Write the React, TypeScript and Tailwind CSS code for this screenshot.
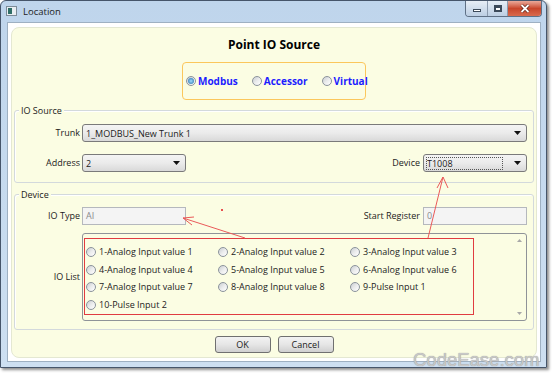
import React from 'react';

interface RadioProps {
    checked?: boolean;
}

// Small Aero-style radio circle
const Radio: React.FC<RadioProps> = ({ checked = false }) => (
    <span className="flex h-[10px] w-[10px] shrink-0 items-center justify-center rounded-full border border-[#8b939b] bg-linear-to-br from-[#c9cdd1] via-[#ebeced] to-[#ffffff]">
        {checked && <span className="h-[6px] w-[6px] rounded-full bg-radial from-[#9fdcff] to-[#1d6ca6]" />}
    </span>
);

interface ComboProps {
    value: string;
    className?: string;
    focused?: boolean;
}

const Combo: React.FC<ComboProps> = ({ value, className = '', focused }) => (
    <div className={`flex h-[18px] items-center rounded-[3px] border border-[#7a7a7a] bg-linear-to-b from-[#f4f4f4] via-[#ebebeb] to-[#d9d9d9] pl-[2px] pr-[5px] ${className}`}>
        <span className="flex h-[14px] flex-1 items-center">
            <span className={`flex h-[13px] items-center leading-none ${focused ? 'w-[92%] border border-dotted border-[#555]' : 'pl-[1px]'}`}>
                {value}
            </span>
        </span>
        <svg width="7" height="4" viewBox="0 0 7 4" className="ml-[4px] shrink-0">
            <path d="M0 0h7L3.5 4z" fill="#111" />
        </svg>
    </div>
);

const TextBox: React.FC<{ value: string }> = ({ value }) => (
    <div className="flex h-[18px] w-[104px] items-center border border-[#b5b8bd] bg-[#f4f4f4] pl-[3px] text-[#8a8a8a]">
        {value}
    </div>
);

const ioItems = [
    '1-Analog Input value 1',
    '2-Analog Input value 2',
    '3-Analog Input value 3',
    '4-Analog Input value 4',
    '5-Analog Input value 5',
    '6-Analog Input value 6',
    '7-Analog Input value 7',
    '8-Analog Input value 8',
    '9-Pulse Input 1',
    '10-Pulse Input 2',
];

export default function App() {
    return (
        <div className="relative h-[374px] w-[554px] overflow-hidden bg-white font-['Open_Sans','Noto_Sans',sans-serif] text-[9px] text-[#1b1b1b]">
            {/* Window */}
            <div className="flex h-[368px] w-[547px] flex-col rounded-t-[6px] border border-[#46556a] bg-linear-to-b from-[#bfd5ec] to-[#cddff1] shadow-[2px_2px_3px_rgba(0,0,0,0.45)]">
                {/* Title bar */}
                <div className="flex h-[21px] shrink-0 items-start">
                    <div className="ml-[5px] mt-[5px] flex h-[10px] w-[11px] items-center border border-[#7d8c99] bg-[#e9eef2]">
                        <span className="ml-[1px] h-[6px] w-[4px] bg-[#2f6e67]" />
                    </div>
                    <span className="ml-[6px] mt-[4px] text-[9.5px] text-[#1d1d1d]">Location</span>
                    <div className="flex-1" />
                    <div className="mr-[4px] flex h-[16px] overflow-hidden rounded-b-[4px] border border-t-0 border-[#5f7085]">
                        <div className="flex w-[22px] items-center justify-center border-r border-[#8a9aad] bg-linear-to-b from-[#e7eef6] to-[#bccee3]">
                            <span className="mt-[3px] h-[3px] w-[8px] border border-[#3c4a5a] bg-white" />
                        </div>
                        <div className="flex w-[20px] items-center justify-center border-r border-[#8a9aad] bg-linear-to-b from-[#e7eef6] to-[#bccee3]">
                            <span className="h-[7px] w-[8px] border-2 border-[#3c4a5a] border-t-[3px] bg-white" />
                        </div>
                        <div className="flex w-[33px] items-center justify-center bg-linear-to-b from-[#e9a99a] via-[#c8462b] to-[#d96a4d]">
                            <svg width="10" height="9" viewBox="0 0 10 9">
                                <path d="M1.5 1l7 7M8.5 1l-7 7" stroke="#5a1c10" strokeWidth="3.2" />
                                <path d="M1.5 1l7 7M8.5 1l-7 7" stroke="#ffffff" strokeWidth="1.8" />
                            </svg>
                        </div>
                    </div>
                </div>

                {/* Client area */}
                <div className="mb-[5px] ml-[6px] mr-[5px] flex flex-1 flex-col border border-[#9eb0c2] bg-white px-[3px] pb-[3px] pt-[4px]">
                    <div className="flex flex-1 flex-col rounded-[8px] border border-[#e4e8d2] bg-[#fbfde3]">
                        <div className="flex h-[33px] items-center justify-center text-[12px] font-bold text-black">
                            Point IO Source
                        </div>

                        {/* Source type radios */}
                        <div className="mx-auto mt-[1px] flex h-[38px] w-[184px] items-center gap-[14px] rounded-[4px] border border-[#fbc75c] pl-[3px] text-[10px] font-bold text-[#1d1dff]">
                            <span className="flex items-center gap-[2px]"><Radio checked />Modbus</span>
                            <span className="flex items-center gap-[2px]"><Radio />Accessor</span>
                            <span className="flex items-center gap-[2px]"><Radio />Virtual</span>
                        </div>

                        {/* IO Source group */}
                        <div className="mx-[2px] mt-[10px] flex h-[73px] flex-col rounded-[3px] border border-[#d3d9dc] shadow-[inset_1px_1px_0_#ffffff]">
                            <span className="-mt-[7px] ml-[4px] self-start bg-[#fbfde3] px-[2px] leading-[13px]">IO Source</span>
                            <div className="mt-[7px] flex items-center">
                                <span className="w-[67px] pr-[2px] text-right">Trunk</span>
                                <Combo value="1_MODBUS_New Trunk 1" className="mr-[6px] flex-1" />
                            </div>
                            <div className="mt-[12px] flex items-center">
                                <span className="w-[67px] pr-[2px] text-right">Address</span>
                                <Combo value="2" className="w-[104px]" />
                                <span className="flex-1 pr-[3px] text-right">Device</span>
                                <Combo value="T1008" focused className="mr-[6px] w-[104px]" />
                            </div>
                        </div>

                        {/* Device group */}
                        <div className="mx-[2px] mt-[11px] flex h-[136px] flex-col rounded-[3px] border border-[#d3d9dc] shadow-[inset_1px_1px_0_#ffffff]">
                            <span className="-mt-[7px] ml-[4px] self-start bg-[#fbfde3] px-[2px] leading-[13px]">Device</span>
                            <div className="mt-[6px] flex items-center">
                                <span className="w-[67px] pr-[2px] text-right">IO Type</span>
                                <TextBox value="AI" />
                                <span className="flex-1 pr-[3px] text-right">Start Register</span>
                                <div className="mr-[6px]"><TextBox value="0" /></div>
                            </div>
                            <div className="mt-[8px] flex items-center">
                                <span className="w-[67px] pr-[2px] text-right">IO List</span>
                                <div className="mr-[6px] flex h-[88px] flex-1 rounded-[3px] border border-[#8f9398]">
                                    <div className="grid flex-1 auto-rows-[17.7px] grid-cols-[132px_132px_132px] content-start pl-[3px] pt-[9px]">
                                        {ioItems.map((item) => (
                                            <span key={item} className="flex items-center gap-[3px]">
                                                <Radio />
                                                {item}
                                            </span>
                                        ))}
                                    </div>
                                    <div className="flex w-[13px] flex-col items-center justify-between py-[5px]">
                                        <svg width="5" height="3" viewBox="0 0 5 3"><path d="M0 3h5L2.5 0z" fill="#a8a8a8" /></svg>
                                        <svg width="5" height="3" viewBox="0 0 5 3"><path d="M0 0h5L2.5 3z" fill="#a8a8a8" /></svg>
                                    </div>
                                </div>
                            </div>
                        </div>

                        {/* Buttons */}
                        <div className="mt-[6px] flex justify-center gap-[7px]">
                            <button type="button" className="h-[17px] w-[56px] rounded-[3px] border border-[#707070] bg-linear-to-b from-[#f3f3f3] via-[#e6e6e6] to-[#d0d0d0] leading-none">OK</button>
                            <button type="button" className="h-[17px] w-[56px] rounded-[3px] border border-[#707070] bg-linear-to-b from-[#f3f3f3] via-[#e6e6e6] to-[#d0d0d0] leading-none">Cancel</button>
                        </div>
                    </div>
                </div>
            </div>

            {/* Red annotations */}
            <svg className="pointer-events-none absolute left-0 top-0" width="554" height="374" viewBox="0 0 554 374">
                <rect x="84.5" y="238.5" width="389" height="76" fill="none" stroke="#e03c40" strokeWidth="1" />
                <path d="M245 238L183 218M183 218L194 217M183 218L192 225" stroke="#ea5a5a" strokeWidth="1" fill="none" />
                <path d="M428 238L443 177M443 177L437 188M443 177L448 188" stroke="#ea5a5a" strokeWidth="1" fill="none" />
                <rect x="221" y="209" width="2" height="2" fill="#e85050" />
            </svg>

            {/* Watermark */}
            <span className="absolute left-[413px] top-[350px] font-['Liberation_Sans',Arial,sans-serif] text-[18.5px] leading-[20px] text-[#c8c8c8] [text-shadow:0_0_1px_#8a8a8a]">
                CodeEase.com
            </span>
        </div>
    );
}
